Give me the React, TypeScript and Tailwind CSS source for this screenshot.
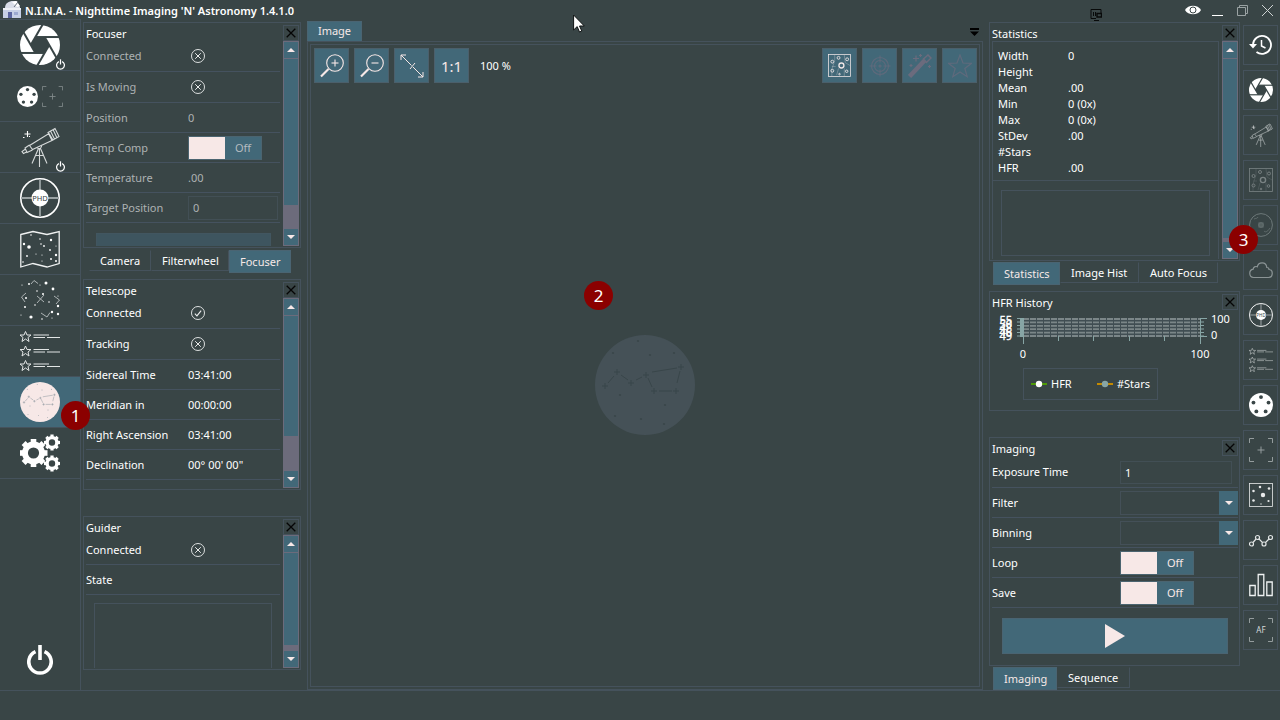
import type { ReactNode } from "react";

const LINE = "border-[#45525c]";

/* ---------- icons ---------- */

type IconProps = { className?: string };

function Aperture({ className = "" }: IconProps) {
  const pts = [0, 1, 2, 3, 4, 5].map((i) => {
    const a = (i * Math.PI) / 3;
    return [9.2 * Math.cos(a), 9.2 * Math.sin(a)];
  });
  return (
    <svg viewBox="-20 -20 40 40" className={className} aria-hidden="true">
      <circle r="20" fill="#fff" />
      <polygon points={pts.map((p) => p.join(",")).join(" ")} fill="#394546" />
      {pts.map((p, i) => {
        const q = pts[(i + 1) % 6];
        return (
          <line
            key={i}
            x1={p[0]}
            y1={p[1]}
            x2={p[0] + (q[0] - p[0]) * 2.9}
            y2={p[1] + (q[1] - p[1]) * 2.9}
            stroke="#394546"
            strokeWidth="2"
          />
        );
      })}
    </svg>
  );
}

function Power({ className = "" }: IconProps) {
  return (
    <svg viewBox="0 0 26 30" className={className} fill="none" stroke="#fff" strokeWidth="3.6" aria-hidden="true">
      <path d="M8.5 6.6A11.2 11.2 0 1 0 17.5 6.6" />
      <path d="M13 0V15" />
    </svg>
  );
}

function Wheel({ className = "" }: IconProps) {
  return (
    <svg viewBox="-10 -10 20 20" className={className} aria-hidden="true">
      <circle r="10" fill="#fff" />
      {[-90, -18, 54, 126, 198].map((d) => {
        const a = (d * Math.PI) / 180;
        return <circle key={d} cx={6.6 * Math.cos(a)} cy={6.6 * Math.sin(a)} r="1.6" fill="#394546" />;
      })}
    </svg>
  );
}

function Brackets({ className = "", text }: IconProps & { text?: string }) {
  return (
    <svg viewBox="0 0 24 24" className={className} fill="none" stroke="#949c9d" strokeWidth="1" aria-hidden="true">
      <path d="M.5 5V.5H5M19 .5h4.500V5M23.500 19v4.500H19M5 23.500H.5V19" />
      {text ? (
        <text x="12" y="15" textAnchor="middle" fontSize="8" fill="#d5d9d9" stroke="none">
          {text}
        </text>
      ) : (
        <path d="M12 8.500v7M8.500 12h7" />
      )}
    </svg>
  );
}

function Scope({ className = "" }: IconProps) {
  return (
    <svg viewBox="0 0 40 40" className={className} fill="none" stroke="#d5d9d9" strokeWidth="1.100" aria-hidden="true">
      <path d="M9.500 18.500 29 6.500 33 13 12.500 22.500ZM28 5.500 35 1.500 39 9.500 32 13.500ZM30.500 4 34.500 12M33 2.500 37 11M9.500 18 5 21 7 25.500 12.500 23M5.500 22 2 24.500 3.500 26.500 6.500 25" />
      <path d="M17 20.500a2.500 2.500 0 0 0 4.500-2M19.500 21.500V40M18.500 21.500 12 36.500M20.500 21.500 27 36.500M16 28.500h7" />
      <path d="M7.500 4v6M4.500 7h6" stroke="#fff" />
      <path d="M3 10.500h1.500M9 9.500h1" stroke="#fff" />
    </svg>
  );
}

function Phd({ className = "", label = "PHD" }: IconProps & { label?: string }) {
  return (
    <svg viewBox="-20 -20 40 40" className={className} aria-hidden="true">
      <circle r="19.200" fill="none" stroke="#fff" strokeWidth="1.600" />
      <path d="M-19 0H19M0-19V19" stroke="#9aa2a3" strokeWidth="1.800" />
      <circle r="8.500" fill="#fff" />
      <text y="2.600" textAnchor="middle" fontSize="7.500" fill="#394546">
        {label}
      </text>
    </svg>
  );
}

function MapIcon({ className = "" }: IconProps) {
  const stars = [[4, 15, 1.2], [9, 18, 1.8], [7, 27, 0.9], [20, 10, 0.8], [21, 15, 0.8], [24, 17, 0.9], [31, 11, 1.2], [30, 21, 0.9], [36, 26, 1.2], [36, 32, 1], [31, 30, 1], [16, 25, 0.6], [22, 26, 0.6], [22, 32, 0.6], [11, 6, 0.8], [3, 33, 0.8], [36, 17, 0.6]];
  return (
    <svg viewBox="0 0 40 40" className={className} aria-hidden="true">
      <path d="M.8 5.500 13 2.500 27 5.500 39.200 2.500V34.500L27 38 13 34.500.8 38Z" fill="none" stroke="#f0f2f2" strokeWidth="1.300" />
      {stars.map(([x, y, r], i) => (
        <circle key={i} cx={x} cy={y} r={r} fill="#fff" />
      ))}
    </svg>
  );
}

function SkyIcon({ className = "" }: IconProps) {
  const stars = [[2, 9, 0.6], [9, 8, 1], [26, 7, 1.5], [33, 13, 1.4], [5, 31, 1], [11, 41, 1.6], [1, 39, 0.6], [23, 18, 1], [17, 15, 0.8], [29, 26, 0.8], [38, 30, 1.2], [38, 38, 1.2], [32, 36, 1.2], [15, 29, 0.8], [6, 22, 1], [22, 43, 0.8], [38, 20, 0.6], [20, 9, 0.6], [32, 42, 0.6]];
  return (
    <svg viewBox="0 4 40 40" className={className} aria-hidden="true">
      <path d="M11 8 14 4.500 18 7.500M6 17 1.500 21 5 26M34 20l5.500 4L36 28M17 20l7 6M24 19 17 27M21 37l6 4 3-4.500" fill="none" stroke="#aeb4b5" strokeWidth="1" />
      {stars.map(([x, y, r], i) => (
        <circle key={i} cx={x} cy={y} r={r} fill="#fff" />
      ))}
    </svg>
  );
}

function StarList({ className = "" }: IconProps) {
  return (
    <svg viewBox="0 0 40 40" className={className} fill="none" stroke="#e2e5e5" strokeWidth="1" aria-hidden="true">
      {[0, 14.5, 29].map((y) => (
        <g key={y} transform={`translate(0 ${y})`}>
          <path d="M5.500 0.500 7 4h4L8 6.500 9 10.500 5.500 8 2 10.500 3 6.500 0 4h4Z" />
          <path d="M13.500 4H29M13.500 6.500H25M27 6.500H40" />
        </g>
      ))}
    </svg>
  );
}

function Constellation({ className = "", disc, ink }: IconProps & { disc: string; ink: string }) {
  const nodes = [[-40, 1], [-28, -13], [-14, -2], [1, -10], [36, -18], [9, 6], [31, 6]];
  const dots = [[-7, -44], [-32, -32], [5, -30], [29, -32], [-25, 10], [20, 20], [-30, 31], [-4, 34], [19, 39]];
  return (
    <svg viewBox="-50 -50 100 100" className={className} aria-hidden="true">
      <circle r="50" fill={disc} />
      <g stroke={ink} strokeWidth="1" fill="none">
        <path d="M-37-2-31-9M-24-10-17-5M-9-5-3-8M7-13 32-17M35-14 32-2M3-7 7 2M14 6H27" />
        {nodes.map(([x, y], i) => (
          <path key={i} d={`M${x - 3} ${y}h6M${x} ${y - 3}v6`} />
        ))}
      </g>
      {dots.map(([x, y], i) => (
        <circle key={i} cx={x} cy={y} r="1.100" fill={ink} />
      ))}
    </svg>
  );
}

function Gear({ x, y, r, n }: { x: number; y: number; r: number; n: number }) {
  const teeth = Array.from({ length: n }, (_, i) => (i * 360) / n);
  return (
    <g transform={`translate(${x} ${y})`}>
      <circle r={r * 0.61} fill="none" stroke="#fff" strokeWidth={r * 0.42} />
      {teeth.map((t) => (
        <rect key={t} x={-r * 0.2} y={-r} width={r * 0.4} height={r * 0.32} fill="#fff" transform={`rotate(${t})`} />
      ))}
    </g>
  );
}

function Gears({ className = "" }: IconProps) {
  return (
    <svg viewBox="0 0 40 40" className={className} aria-hidden="true">
      <Gear x={13.5} y={20} r={14} n={8} />
      <Gear x={32} y={9.5} r={8} n={8} />
      <Gear x={32} y={30.5} r={8} n={8} />
    </svg>
  );
}

function History({ className = "" }: IconProps) {
  return (
    <svg viewBox="0 0 24 24" className={className} fill="none" stroke="#fff" strokeWidth="1.800" aria-hidden="true">
      <path d="M4 11.500A9 9 0 1 1 7.500 19" />
      <path d="M0 11h8L4 15.500Z" fill="#fff" stroke="none" />
      <path d="M12.500 7v6l4 2" strokeWidth="1.500" />
    </svg>
  );
}

function StarField({ className = "", rings = false, color = "#fff" }: IconProps & { rings?: boolean; color?: string }) {
  const stars = [[4.5, 8, 1.5], [11, 4, 1.5], [20, 5.5, 1.5], [14, 12, 2.6], [4.5, 17.5, 1.5], [19.5, 18, 1.3], [12, 21, 0.8]];
  return (
    <svg viewBox="0 0 24 24" className={className} fill="none" stroke={color} aria-hidden="true">
      <rect x=".5" y=".5" width="23" height="23" strokeWidth=".8" />
      {stars.map(([x, y, r], i) =>
        rings ? (
          <circle key={i} cx={x} cy={y} r={r} strokeWidth={r > 2 ? 1.4 : 0.9} />
        ) : (
          <circle key={i} cx={x} cy={y} r={r * 0.85} fill={color} stroke="none" />
        ),
      )}
      {rings && <path d="M7 1v6l-3 9v7M17 1l1 8 5 3M8 13l-4 0M9 22l2-7M17 15l0 8" strokeWidth=".5" opacity=".6" />}
    </svg>
  );
}

function GuideDisc({ className = "" }: IconProps) {
  return (
    <svg viewBox="0 0 24 24" className={className} fill="none" stroke="#6d7879" aria-hidden="true">
      <circle cx="12" cy="12" r="11.400" />
      <rect x="10" y="10" width="4" height="4" />
      <path d="M12 9v6M9 12h6M5 6c2-1 3 0 4-2M15 18c2 2 4 0 6-3" strokeWidth=".7" />
    </svg>
  );
}

function Cloud({ className = "" }: IconProps) {
  return (
    <svg viewBox="0 0 24 24" className={className} fill="none" stroke="#8b9495" strokeWidth="1.200" aria-hidden="true">
      <path d="M4.500 19.500a4.200 4.200 0 0 1-.3-8.300C4.200 9 6.500 8 8.200 8.800 9.500 3.800 17 3.300 17.800 9.500c1.200 0 2.200.8 2.200 2 4.500.3 4.300 8-.5 8Z" />
    </svg>
  );
}

function Nodes({ className = "" }: IconProps) {
  const p = [[2.5, 16], [8.5, 9.5], [15, 16], [21.5, 9.5]];
  return (
    <svg viewBox="0 0 24 24" className={className} fill="none" stroke="#e3e6e6" strokeWidth="1.200" aria-hidden="true">
      {p.map(([x, y], i) => (
        <circle key={i} cx={x} cy={y} r="2" />
      ))}
      <path d="M4 14.500 7 11M10 11 13.500 14.500M16.500 14.500 20 11" />
    </svg>
  );
}

function Bars({ className = "" }: IconProps) {
  return (
    <svg viewBox="0 0 24 24" className={className} fill="none" stroke="#f0f2f2" strokeWidth="1.300" aria-hidden="true">
      <path d="M.8 12.500h5.400v10H.8ZM9.200 1.500h5.600v21H9.200ZM17.800 9h5.400v13.500h-5.400Z" />
    </svg>
  );
}

function Magnifier({ plus = false }: { plus?: boolean }) {
  return (
    <svg viewBox="0 0 24 24" className="size-6" fill="none" stroke="#f7e8e7" strokeWidth="1.100" aria-hidden="true">
      <circle cx="15" cy="9" r="8.300" />
      <path d="M11.500 9h7" />
      {plus && <path d="M15 5.500v7" />}
      <path d="M8.500 15 1 22.500" strokeWidth="2.200" />
    </svg>
  );
}

function Status({ ok = false }: { ok?: boolean }) {
  return (
    <svg viewBox="0 0 20 20" className="ml-[3px] size-[14px]" fill="none" stroke="#eceeee" strokeWidth="1.300" role="img" aria-label={ok ? "Yes" : "No"}>
      <circle cx="10" cy="10" r="9.300" />
      {ok ? <path d="m5.500 11 3 3 6-7.500" strokeWidth="1.600" /> : <path d="m6 6 8 8M14 6l-8 8" strokeWidth="1.400" />}
    </svg>
  );
}

function Tri({ down = false }: { down?: boolean }) {
  return (
    <svg viewBox="0 0 8 4" className="h-1 w-2" aria-hidden="true">
      <path d={down ? "M0 0h8L4 4Z" : "M0 4h8L4 0Z"} fill="#f7e8e7" />
    </svg>
  );
}

/* ---------- building blocks ---------- */

function Panel({ title, dim, scroll, rest = "", children }: { title: string; dim?: boolean; scroll?: boolean; rest?: string; children: ReactNode }) {
  return (
    <section className={`flex min-h-0 flex-1 flex-col overflow-hidden border ${LINE} pt-[2px] pr-px pb-[1px] pl-[2px]`}>
      <div className="flex h-4 shrink-0 items-start justify-between">
        <h2 className="leading-[17px] text-white">{title}</h2>
        <button aria-label={`Close ${title}`} className={`grid h-4 w-4 place-items-center border ${LINE}`}>
          <svg viewBox="0 0 10 10" className="size-[10px]" stroke="#050505" strokeWidth="1.300" aria-hidden="true">
            <path d="M.7.7 9.300 9.300M9.300.7.7 9.300" />
          </svg>
        </button>
      </div>
      <div className={`flex min-h-0 flex-1 ${dim ? "text-[#adb2b3]" : "text-white"}`}>
        <div className="min-w-0 flex-1 overflow-hidden">{children}</div>
        {scroll && (
          <div className="ml-[3px] flex w-4 shrink-0 flex-col border border-[#6c6b7b] bg-[#426878]">
            <button aria-label="Scroll up" className="grid h-[17px] shrink-0 place-items-center border-b border-[#6c6b7b]">
              <Tri />
            </button>
            <div className="min-h-0 flex-1" />
            <div className={`shrink-0 bg-[#6c6b7b] ${rest}`} />
            <button aria-label="Scroll down" className="grid h-4 shrink-0 place-items-center">
              <Tri down />
            </button>
          </div>
        )}
      </div>
    </section>
  );
}

function Row({ label, children, tall, wide }: { label: string; children?: ReactNode; tall?: boolean; wide?: boolean }) {
  return (
    <div className={`flex items-center border-b border-[#45525f] ${tall ? "h-[31px]" : "h-[30px]"}`}>
      <span className={wide ? "w-32 shrink-0" : "w-[102px] shrink-0"}>{label}</span>
      {children}
    </div>
  );
}

function Toggle({ label, dim }: { label: string; dim?: boolean }) {
  return (
    <label className={`flex h-6 w-[74px] border border-[#4b6470] bg-[#426878] ${dim ? "text-[#b5bcc0]" : "text-[#f7e8e7]"}`}>
      <input type="checkbox" aria-label={label} className="peer sr-only" />
      <span className="flex-1 bg-[#f7e8e7]" />
      <span className="flex-1 text-center leading-[22px]">Off</span>
    </label>
  );
}

function DropDown({ label }: { label: string }) {
  return (
    <div className="relative flex h-6 flex-1">
      <select aria-label={label} className="h-full w-full appearance-none border border-[#445058] bg-transparent">
        <option></option>
      </select>
      <span className="pointer-events-none absolute inset-y-0 right-0 grid w-[19px] place-items-center bg-[#426878]">
        <Tri down />
      </span>
    </div>
  );
}

function Tabs({ items, active }: { items: { name: string; width: string }[]; active: string }) {
  return (
    <div role="tablist" className="flex shrink-0 items-start">
      {items.map(({ name, width }) => (
        <button
          key={name}
          role="tab"
          aria-selected={name === active}
          className={`overflow-hidden border pl-[10px] text-left whitespace-nowrap ${width} ${
            name === active ? "h-[23px] border-[#4a6472] bg-[#426878] text-[#f7e8e7]" : "h-[21px] border-t-transparent border-r-[#45525c] border-b-[#45525c] border-l-transparent text-white"
          }`}
        >
          {name}
        </button>
      ))}
    </div>
  );
}

function Badge({ n, place }: { n: number; place: string }) {
  return (
    <span className={`absolute z-10 grid size-[29px] place-items-center rounded-full bg-[#8b0000] text-[17px] leading-none text-white ${place}`}>{n}</span>
  );
}

function ToolButton({ label, children }: { label: string; children: ReactNode }) {
  return (
    <button aria-label={label} className="grid size-[35px] place-items-center border border-[#4b5f6b] bg-[#426878] text-[15px] text-[#f7e8e7]">
      {children}
    </button>
  );
}

/* ---------- regions ---------- */

function TitleBar() {
  return (
    <header className="relative flex h-[19px] shrink-0 items-start justify-between">
      <div className="flex items-start gap-1">
        <svg viewBox="0 0 18 18" className="ml-[3px] size-[18px]" aria-hidden="true">
          <path d="M2 8C2 3 6 1 10 1h4l3 6v1Z" fill="#d9dde8" />
          <path d="M9 2 13 1 17 6 14 7Z" fill="#fff" />
          <path d="m11 7 4-5" stroke="#65707c" />
          <path d="M0 8h18v10H0Z" fill="#c6cfe6" />
          <path d="M0 8h18v2H0Z" fill="#eef0f6" />
          <path d="M5 12h4v6H5Z" fill="#5a64a0" />
          <path d="M11 12h4v3h-4Z" fill="#9ca9d0" />
        </svg>
        <h1 className="text-[11px] leading-[21px] font-semibold text-white">N.I.N.A. - Nighttime Imaging 'N' Astronomy 1.4.1.0</h1>
      </div>
      <svg viewBox="0 0 12 12" className="absolute top-[9px] right-[178px] size-[12px]" fill="none" stroke="#080a0a" aria-hidden="true">
        <path d="M6 9.500H1V.5H11V4M3.500 3v4M5.500 3v4M4 11.500H9" />
        <path d="M7 4.500h4.500V8H7Z" fill="#394546" strokeWidth="1.400" />
      </svg>
      <div className="flex items-start">
        <button aria-label="Show overlay" className="mt-[5px] mr-[11px]">
          <svg viewBox="0 0 16 10" className="h-[10px] w-4" aria-hidden="true">
            <path d="M0 5C3-.8 13-.8 16 5 13 10.800 3 10.800 0 5Z" fill="#fff" />
            <circle cx="8" cy="5" r="3" fill="none" stroke="#394546" />
          </svg>
        </button>
        <button aria-label="Minimize" className="mt-[15px] mr-[14px] h-px w-[11px] bg-white" />
        <button aria-label="Restore" className="mt-[5px] mr-[14px]">
          <svg viewBox="0 0 11 11" className="size-[11px]" fill="none" stroke="#9aa2a3" aria-hidden="true">
            <path d="M.5 2.500h8v8h-8ZM2.500 2.500v-2h8v8h-2" />
          </svg>
        </button>
        <button aria-label="Close" className="mt-[5px] mr-[7px]">
          <svg viewBox="0 0 11 11" className="size-[11px]" stroke="#cfd3d3" aria-hidden="true">
            <path d="m0 0 11 11M11 0 0 11" />
          </svg>
        </button>
      </div>
      <svg viewBox="0 0 12 19" className="absolute top-[14px] left-[573px] z-20 h-[19px] w-3" aria-hidden="true">
        <path d="M.6 1v15l3.600-3.400L6.500 18l2.300-1-2.300-5h4.800Z" fill="#fff" stroke="#101414" />
      </svg>
    </header>
  );
}

function MainRail() {
  const items: { name: string; icon: ReactNode; power?: boolean; active?: boolean }[] = [
    { name: "Camera", icon: <Aperture className="size-10" />, power: true },
    {
      name: "Filter wheel and focuser",
      icon: (
        <span className="flex items-center gap-1">
          <Wheel className="size-[21px]" />
          <Brackets className="size-[21px] opacity-80" />
        </span>
      ),
    },
    { name: "Telescope", icon: <Scope className="size-10" />, power: true },
    { name: "Guider", icon: <Phd className="size-10" /> },
    { name: "Sky atlas", icon: <MapIcon className="size-10" /> },
    { name: "Framing", icon: <SkyIcon className="size-10" /> },
    { name: "Sequence", icon: <StarList className="size-10" /> },
    { name: "Imaging", icon: <Constellation className="size-10" disc="#f7e8e7" ink="#6f828c" />, active: true },
    { name: "Options", icon: <Gears className="size-10" /> },
  ];
  return (
    <nav className={`flex w-[81px] shrink-0 flex-col border-t border-r ${LINE}`}>
      {items.map((it) => (
        <div key={it.name} className={`relative flex h-[51px] shrink-0 border-b ${LINE} ${it.active ? "bg-[#426878]" : ""}`}>
          <button aria-label={it.name} className="grid flex-1 place-items-center">
            {it.icon}
          </button>
          {it.power && <Power className="absolute right-[15px] bottom-0 h-[11px] w-[9px]" />}
          {it.active && <Badge n={1} place="-right-[10px] -bottom-[3px]" />}
        </div>
      ))}
      <button aria-label="Exit" className="mt-auto mb-[15px] grid place-items-center">
        <Power className="h-[30px] w-[26px]" />
      </button>
    </nav>
  );
}

function EquipmentColumn() {
  return (
    <div className="grid w-[226px] shrink-0 grid-rows-[257fr_237fr_174fr] pt-[3px] pr-[6px] pl-[2px]">
      <div className="flex min-h-0 flex-col gap-[2px] pb-[6px]">
        <Panel title="Focuser" dim scroll rest="h-6">
          <Row label="Connected" tall><Status /></Row>
          <Row label="Is Moving" tall><Status /></Row>
          <Row label="Position">0</Row>
          <Row label="Temp Comp"><Toggle label="Temp Comp" dim /></Row>
          <Row label="Temperature">.00</Row>
          <Row label="Target Position">
            <input aria-label="Target Position" defaultValue="0" className="h-6 w-[90px] border border-[#424f55] bg-transparent px-1" />
          </Row>
          <button aria-label="Move" className="mt-[10px] ml-[10px] block h-6 w-[175px] border border-[#425660] bg-[#3e555f]" />
        </Panel>
        <div className="pl-[6px]">
          <Tabs items={[{ name: "Camera", width: "w-[62px]" }, { name: "Filterwheel", width: "w-[78px]" }, { name: "Focuser", width: "w-[62px]" }]} active="Focuser" />
        </div>
      </div>
      <div className="flex min-h-0 flex-col pb-[26px]">
        <Panel title="Telescope" scroll rest="h-[35px]">
          <Row label="Connected" tall><Status ok /></Row>
          <Row label="Tracking" tall><Status /></Row>
          <Row label="Sidereal Time">03:41:00</Row>
          <Row label="Meridian in">00:00:00</Row>
          <Row label="Right Ascension">03:41:00</Row>
          <Row label="Declination">00° 00' 00"</Row>
        </Panel>
      </div>
      <div className="flex min-h-0 flex-col pb-5">
        <Panel title="Guider" scroll rest="h-[6px]">
          <Row label="Connected"><Status /></Row>
          <Row label="State" />
          <div className={`mt-2 mr-2 ml-2 h-40 border ${LINE}`} />
        </Panel>
      </div>
    </div>
  );
}

function ImageDock() {
  return (
    <main className="relative flex min-w-0 flex-1 flex-col pt-[2px]">
      <div className="flex h-5 items-center justify-between">
        <button role="tab" aria-selected="true" className="h-[21px] w-[55px] border border-[#4a6472] bg-[#426878] text-[#f7e8e7]">Image</button>
        <button aria-label="Document list" className="mt-[2px] mr-1">
          <svg viewBox="0 0 9 8" className="h-2 w-[9px]" aria-hidden="true">
            <path d="M0 0h9v2H0ZM0 3.500h9L4.500 8Z" fill="#000" />
          </svg>
        </button>
      </div>
      <div className={`flex min-h-0 flex-1 border ${LINE} p-[2px]`}>
        <div className={`flex min-h-0 flex-1 flex-col border ${LINE}`}>
          <div className="flex justify-between px-[2px] pt-[3px]">
            <div className="flex items-center gap-[5px] pl-px text-white">
              <ToolButton label="Zoom in"><Magnifier plus /></ToolButton>
              <ToolButton label="Zoom out"><Magnifier /></ToolButton>
              <ToolButton label="Fit to window">
                <svg viewBox="0 0 24 24" className="size-6" fill="none" stroke="#f7e8e7" aria-hidden="true">
                  <path d="M1 6V1h5M1 1 11.500 11.500M13 13 23 23M18 23h5v-5M10 15l5-6" />
                </svg>
              </ToolButton>
              <ToolButton label="Actual size">1:1</ToolButton>
              <span className="ml-[6px]">100 %</span>
            </div>
            <div className="flex gap-[5px]">
              <ToolButton label="Auto stretch"><StarField className="size-[23px]" rings color="#efe6e6" /></ToolButton>
              <ToolButton label="Crosshair">
                <svg viewBox="0 0 24 24" className="size-6" fill="none" stroke="#5f6a7c" strokeWidth="1.100" aria-hidden="true">
                  <circle cx="12" cy="12" r="8.500" />
                  <circle cx="12" cy="12" r="5.500" />
                  <circle cx="12" cy="12" r="1" />
                  <path d="M12 1.500v7M12 15.500v7M1.500 12h7M15.500 12h7" />
                </svg>
              </ToolButton>
              <ToolButton label="Enhance">
                <svg viewBox="0 0 24 24" className="size-6" fill="none" stroke="#6b6b7d" aria-hidden="true">
                  <path d="M1.500 22.500 18 5" strokeWidth="4.500" />
                  <path d="m15.500 5 4.500-4 3 3-4.500 4.500Z" fill="#426878" strokeWidth="1.500" />
                  <path d="M8 1.500v6M5 4.500h6M3 10v3M1.500 11.500h3M12.500 0v3M11 1.500h3M21.500 11v3M20 12.500h3" strokeWidth="1.200" />
                </svg>
              </ToolButton>
              <ToolButton label="Detect stars">
                <svg viewBox="0 0 24 24" className="size-6" fill="none" stroke="#5f6a7c" strokeWidth="1.200" aria-hidden="true">
                  <path d="m12 1 3 8 8.500.3-6.700 5.200 2.400 8.200L12 18l-7.200 4.700 2.400-8.200L.5 9.300 9 9Z" />
                </svg>
              </ToolButton>
            </div>
          </div>
          <div className="grid min-h-0 flex-1 place-items-center">
            <Constellation className="size-[100px]" disc="#455157" ink="#39464a" />
          </div>
        </div>
      </div>
      <Badge n={2} place="top-[39%] left-[41%]" />
    </main>
  );
}

function HfrChart() {
  const rows = [0, 1, 2, 3, 4, 5];
  return (
    <svg viewBox="0 0 244 52" className="h-[52px] w-[244px]" fontSize="11" fill="#fff" role="img" aria-label="HFR history chart">
      {["55", "50", "48", "46", "49"].map((t, i) => (
        <text key={i} x="20" y={14 + i * 4} textAnchor="end" stroke="#fff" strokeWidth=".3">
          {t}
        </text>
      ))}
      <path d="M29 8H206V27H29Z" fill="#414e53" />
      {rows.map((r) => (
        <path key={r} d={`M31 ${9 + r * 3.4}H208`} stroke="#7b8688" strokeWidth="1.800" strokeDasharray="6 1" />
      ))}
      <path d="M28 8h4v19h-4Z" fill="#87a5a5" />
      {rows.map((r) => (
        <path key={r} d={`M25 ${8.5 + r * 3.5}h5M208 ${8.5 + r * 3.5}h4`} stroke="#87a5a5" />
      ))}
      <path d="M208.500 8v19M208 8.500h7M208 26.500h7M31.500 26v8M66.500 26v5M101.500 26v5M137.500 26v5M172.500 26v5M208.500 26v8" stroke="#87a5a5" />
      <text x="219" y="13">100</text>
      <text x="219" y="29">0</text>
      <text x="31" y="48" textAnchor="middle">0</text>
      <text x="208" y="48" textAnchor="middle">100</text>
    </svg>
  );
}

function Legend({ line, dot, name }: { line: string; dot: string; name: string }) {
  return (
    <span className="flex items-center gap-1">
      <svg viewBox="0 0 16 8" className="h-2 w-4" aria-hidden="true">
        <path d="M0 4h16" stroke={line} strokeWidth="2" />
        <circle cx="8" cy="4" r="3.200" fill={dot} />
      </svg>
      {name}
    </span>
  );
}

function ToolsColumn() {
  const stats = [["Width", "0"], ["Height", ""], ["Mean", ".00"], ["Min", "0 (0x)"], ["Max", "0 (0x)"], ["StDev", ".00"], ["#Stars", ""], ["HFR", ".00"]];
  return (
    <div className="grid w-[257px] shrink-0 grid-rows-[269fr_146fr_253fr] pt-[3px] pl-[6px] text-white">
      <div className="relative flex min-h-0 flex-col gap-px pb-[6px]">
        <Panel title="Statistics" scroll rest="h-1">
          <div className={`flex h-full flex-col border-x border-t ${LINE}`}>
            <table className="mt-[6px] mb-1 ml-[5px] w-40 table-fixed text-left">
              <tbody>
                {stats.map(([k, v]) => (
                  <tr key={k} className="h-4">
                    <th scope="row" className="w-[70px] p-0 leading-4 font-normal">{k}</th>
                    <td className="p-0 leading-4">{v}</td>
                  </tr>
                ))}
              </tbody>
            </table>
            <div className={`flex flex-1 border-t ${LINE} px-2 pt-[9px] pb-[3px]`}>
              <div className={`flex-1 border ${LINE}`} />
            </div>
          </div>
        </Panel>
        <div className="pl-[4px]">
          <Tabs items={[{ name: "Statistics", width: "w-[67px]" }, { name: "Image Hist", width: "w-[79px]" }, { name: "Auto Focus", width: "w-[79px]" }]} active="Statistics" />
        </div>
        <Badge n={3} place="-right-[18px] bottom-[37px]" />
      </div>
      <div className="flex min-h-0 flex-col pb-[26px]">
        <Panel title="HFR History">
          <HfrChart />
          <div className={`mt-[6px] ml-[31px] flex h-8 w-[135px] items-center justify-between border ${LINE} px-[7px]`}>
            <Legend line="#4e9a06" dot="#fff" name="HFR" />
            <Legend line="#c48a00" dot="#87a5a5" name="#Stars" />
          </div>
        </Panel>
      </div>
      <div className="flex min-h-0 flex-col gap-px">
        <Panel title="Imaging">
          <div className="pt-px">
            <Row label="Exposure Time" tall wide>
              <input aria-label="Exposure Time" defaultValue="1" className="mr-[6px] h-[23px] w-0 flex-1 border border-[#424f55] bg-transparent px-1" />
            </Row>
            <Row label="Filter" wide><DropDown label="Filter" /></Row>
            <Row label="Binning" wide><DropDown label="Binning" /></Row>
            <Row label="Loop" wide><Toggle label="Loop" /></Row>
            <Row label="Save" wide><Toggle label="Save" /></Row>
            <div className="px-[10px] pt-[10px]">
              <button aria-label="Start exposure" className="grid h-[36px] w-full place-items-center border border-[#4a6472] bg-[#426878]">
                <svg viewBox="0 0 20 24" className="h-6 w-5" aria-hidden="true">
                  <path d="M0 0 20 12 0 24Z" fill="#f7e8e7" />
                </svg>
              </button>
            </div>
          </div>
        </Panel>
        <div className="pl-[4px]">
          <Tabs items={[{ name: "Imaging", width: "w-[64px]" }, { name: "Sequence", width: "w-[73px]" }]} active="Imaging" />
        </div>
      </div>
    </div>
  );
}

function ToolRail() {
  const tools: [string, ReactNode][] = [
    ["Image history", <History className="size-6" />],
    ["Camera", <Aperture className="size-6" />],
    ["Telescope", <Scope className="size-6 opacity-80" />],
    ["Plate solving", <StarField className="size-6 opacity-60" rings color="#a5acad" />],
    ["Polar alignment", <GuideDisc className="size-6" />],
    ["Weather", <Cloud className="size-6" />],
    ["Guider", <Phd className="size-6" />],
    ["Sequence", <StarList className="size-6 opacity-80" />],
    ["Filter wheel", <Wheel className="size-6" />],
    ["Focuser", <Brackets className="size-6" />],
    ["Image", <StarField className="size-6" color="#e8eaea" />],
    ["HFR history", <Nodes className="size-6" />],
    ["Statistics", <Bars className="size-6" />],
    ["Auto focus", <Brackets className="size-6" text="AF" />],
  ];
  return (
    <nav className="flex w-10 shrink-0 flex-col gap-[5px] pt-[6px] pl-[3px]">
      {tools.map(([name, icon]) => (
        <button key={name} aria-label={name} className={`grid h-10 w-[35px] shrink-0 place-items-center border ${LINE}`}>
          {icon}
        </button>
      ))}
    </nav>
  );
}

export default function App() {
  return (
    <div className="flex h-screen flex-col overflow-hidden bg-[#394546] font-['Noto_Sans',sans-serif] text-[11px] leading-4">
      <TitleBar />
      <div className="flex min-h-0 flex-1">
        <MainRail />
        <EquipmentColumn />
        <ImageDock />
        <ToolsColumn />
        <ToolRail />
      </div>
      <footer className={`h-[30px] shrink-0 border-t ${LINE}`} />
    </div>
  );
}
